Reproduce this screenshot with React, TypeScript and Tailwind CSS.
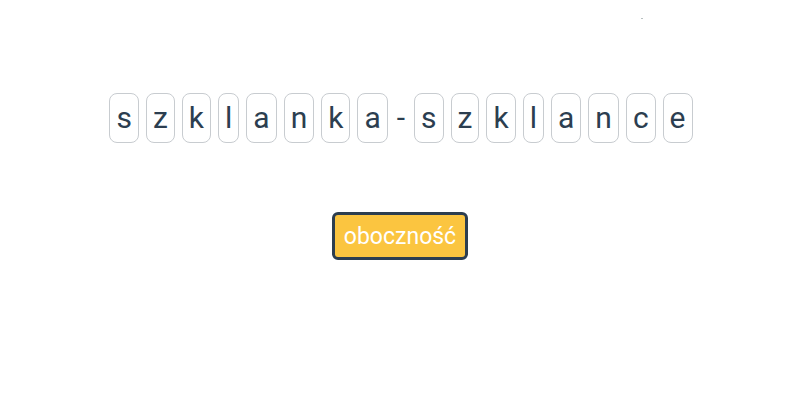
import React from "react";

const left = ["s", "z", "k", "l", "a", "n", "k", "a"];
const right = ["s", "z", "k", "l", "a", "n", "c", "e"];

function Box({ ch }: { ch: string }) {
  return (
    <div className="h-[50px] px-[6px] flex items-center justify-center border border-[#c8ccd0] rounded-[8px] text-[30px] leading-none text-[#2c3e50]">
      {ch}
    </div>
  );
}

export default function App() {
  return (
    <div
      className="relative w-[800px] h-[400px] bg-white flex flex-col items-center pt-[93px]"
      style={{ fontFamily: "Roboto, 'Noto Sans', sans-serif" }}
    >
      <div className="absolute left-[641px] top-[18px] w-[2px] h-[1px] bg-[#b8c0c0]" />
      <div className="flex items-center gap-[7px] pl-[2px]">
        {left.map((c, i) => (
          <Box key={"l" + i} ch={c} />
        ))}
        <span className="text-[30px] leading-none text-[#2c3e50] px-[2px]">-</span>
        {right.map((c, i) => (
          <Box key={"r" + i} ch={c} />
        ))}
      </div>
      <button className="mt-[69px] h-[48px] px-[9px] bg-[#fbc540] border-[3px] border-[#2c3e50] rounded-[6px] text-white text-[23px] leading-none">
        oboczność
      </button>
    </div>
  );
}
